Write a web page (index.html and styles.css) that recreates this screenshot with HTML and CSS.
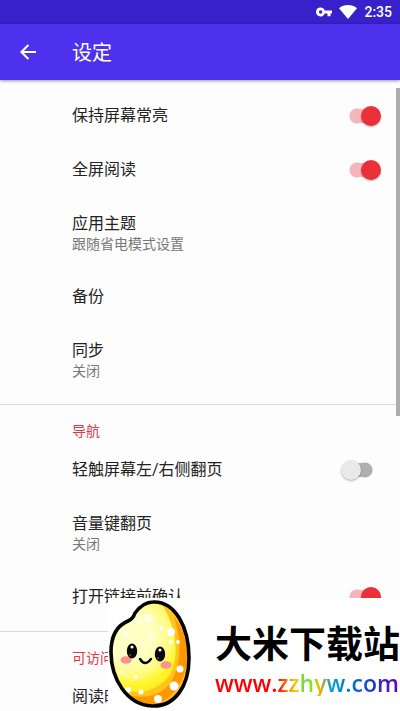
FILE: index.html
```html
<!DOCTYPE html>
<html lang="zh-CN">
<head>
<meta charset="utf-8">
<meta name="viewport" content="width=device-width, initial-scale=1">
<title>设定</title>
<link rel="stylesheet" href="styles.css">
</head>
<body>
<div class="screen">
  <div class="status-bar">
    <svg class="key-icon" width="16" height="10" viewBox="0 0 16 10" aria-hidden="true"><path fill="#fff" fill-rule="evenodd" d="M4.6.4A4.4 4.4 0 0 1 8.7 3.5H16v3h-1.5v2.8h-3V6.5H8.7A4.5 4.5 0 1 1 4.6.4Zm0 2.9a1.7 1.7 0 1 0 0 3.4 1.7 1.7 0 0 0 0-3.4Z"/></svg>
    <svg class="wifi-icon" width="18" height="14" viewBox="0 0 18 14" aria-hidden="true"><path fill="#fff" d="M0 3.2C5-1 13-1 18 3.2L9 14Z"/></svg>
    <span class="clock">2:35</span>
  </div>
  <header class="app-bar">
    <button class="back" type="button" aria-label="返回">
      <svg width="16" height="16" viewBox="0 0 16 16" aria-hidden="true"><path d="M16 8H1.5M8.4 1 1.4 8l7 7" fill="none" stroke="#fff" stroke-width="2"/></svg>
    </button>
    <h1 class="title">设定</h1>
  </header>
  <main class="settings">
    <section class="group">
      <label class="row"><span class="name">保持屏幕常亮</span><input class="switch" type="checkbox" checked></label>
      <label class="row"><span class="name">全屏阅读</span><input class="switch" type="checkbox" checked></label>
      <button class="row" type="button"><span class="name">应用主题<span class="summary">跟随省电模式设置</span></span></button>
      <button class="row" type="button"><span class="name">备份</span></button>
      <button class="row" type="button"><span class="name">同步<span class="summary">关闭</span></span></button>
    </section>
    <section class="group">
      <h2 class="group-title">导航</h2>
      <label class="row"><span class="name">轻触屏幕左/右侧翻页</span><input class="switch" type="checkbox"></label>
      <button class="row" type="button"><span class="name">音量键翻页<span class="summary">关闭</span></span></button>
      <label class="row"><span class="name">打开链接前确认</span><input class="switch" type="checkbox" checked></label>
    </section>
    <section class="group">
      <h2 class="group-title">可访问性</h2>
      <button class="row" type="button"><span class="name">阅读时</span></button>
    </section>
  </main>
  <div class="scroll-thumb"></div>
  <aside class="banner">
    <svg class="mascot" width="84" height="114" viewBox="0 0 84 114" aria-hidden="true">
      <defs>
        <clipPath id="grain"><path d="M27 15C33 7 38 4 45 4C67 3 81 29 81 60C81 88 67 109 44 108C19 107 3 81 3 54C3 39 8 28 20 23Q25 21 27 15Z"/></clipPath>
        <radialGradient id="glow" gradientUnits="userSpaceOnUse" cx="22" cy="38" r="66"><stop offset=".35" stop-color="#ffffc4"/><stop offset=".6" stop-color="#fffb80"/><stop offset=".75" stop-color="#fff52e"/><stop offset="1" stop-color="#ffe600"/></radialGradient>
      </defs>
      <g clip-path="url(#grain)">
        <path fill="#ff9800" d="M0 0h84v114H0z"/>
        <path fill="#ffc51c" d="M0 0h57C76 30 76 72 58 90Q38 106 10 93L0 90Z"/>
        <path fill="url(#glow)" d="M0 0h50C72 31 72 66 58 82Q38 101 8 90L0 90Z"/>
        <path d="M57 10C88 30 89 86 54 105" fill="none" stroke="#ffc233" stroke-width="2"/>
        <g fill="#fff">
          <circle cx="63" cy="34" r="4"/><circle cx="53" cy="30" r="2"/><circle cx="63" cy="44" r="2"/><circle cx="70" cy="44" r="2"/>
          <circle cx="72" cy="71" r="3.5"/><circle cx="66" cy="88" r="4.5"/><circle cx="50" cy="101" r="4"/><circle cx="33" cy="94" r="2.5"/><circle cx="20" cy="92" r="3"/><circle cx="28" cy="79" r="2"/>
          <g opacity=".7"><circle cx="41" cy="20" r="4"/><circle cx="31" cy="24" r="2"/><circle cx="18" cy="36" r="3"/><circle cx="42" cy="39" r="2"/><circle cx="14" cy="74" r="2"/></g>
        </g>
      </g>
      <path d="M27 15C33 7 38 4 45 4C67 3 81 29 81 60C81 88 67 109 44 108C19 107 3 81 3 54C3 39 8 28 20 23Q25 21 27 15Z" fill="none" stroke="#050505" stroke-width="3.6"/>
      <ellipse cx="18" cy="62" rx="5.5" ry="3.8" fill="#ff9090"/><ellipse cx="58" cy="67" rx="5.5" ry="3.8" fill="#ff9090"/>
      <ellipse cx="24" cy="53" rx="5.2" ry="7.5" fill="#080808"/><ellipse cx="52" cy="56" rx="5.2" ry="7.5" fill="#080808"/>
      <circle cx="24" cy="49" r="1.5" fill="#fff"/><circle cx="52" cy="52" r="1.5" fill="#fff"/><circle cx="22" cy="57" r=".6" fill="#fff"/><circle cx="50" cy="60" r=".6" fill="#fff"/>
      <path d="M32 61Q37 69 43 61" fill="none" stroke="#080808" stroke-width="2.4" stroke-linecap="round"/>
    </svg>
    <div class="brand">
      <strong class="brand-name">大米下载站</strong>
      <span class="brand-url">www.zzhyw.com</span>
    </div>
  </aside>
</div>
</body>
</html>
```
FILE: styles.css
```css
* {
  box-sizing: border-box;
}

body {
  margin: 0;
  background: #fdfdfd;
  color: #222;
  font-family: Roboto, "Noto Sans CJK SC", sans-serif;
}

.screen {
  position: relative;
  height: 100vh;
  overflow: hidden;
}

.status-bar {
  display: flex;
  align-items: center;
  justify-content: flex-end;
  height: 24px;
  padding-right: 8px;
  background: #3820cb;
  color: #fff;
}

.wifi-icon {
  margin: 0 7px;
}

.clock {
  font-size: 14px;
  font-weight: 500;
}

.app-bar {
  display: flex;
  align-items: center;
  height: 56px;
  background: #4e31ed;
  box-shadow: 0 1px 3px rgba(0, 0, 0, 0.4);
}

.back {
  display: flex;
  align-items: center;
  width: 72px;
  height: 56px;
  padding: 0 20px;
  border: 0;
  background: none;
}

.title {
  margin: 0;
  padding-top: 2px;
  color: #fff;
  font-size: 20px;
  font-weight: 400;
  line-height: 28px;
}

.settings {
  padding-top: 8px;
}

.group {
  padding-bottom: 8px;
}

.group + .group {
  border-top: 1px solid #d8d8d8;
}

.group-title {
  margin: 0;
  padding: 16px 72px 0;
  color: #dc3c46;
  font-size: 14px;
  font-weight: 400;
  line-height: 21px;
}

.row {
  display: flex;
  align-items: center;
  justify-content: space-between;
  width: 100%;
  padding: 17px 19px 15px 72px;
  border: 0;
  background: none;
  color: inherit;
  font-family: inherit;
  font-size: 16px;
  line-height: 22px;
  text-align: left;
}

.summary {
  display: block;
  color: #777;
  font-size: 14px;
  line-height: 19px;
}

.switch {
  display: flex;
  align-items: center;
  appearance: none;
  width: 40px;
  height: 20px;
  margin: 0;
  background:
    radial-gradient(circle at 24px 10px, #b0b0b0 7px, transparent 8px),
    linear-gradient(#b0b0b0, #b0b0b0) 16px 3px / 8px 14px no-repeat;
}

.switch::before {
  content: "";
  width: 20px;
  height: 20px;
  border-radius: 50%;
  background: #e9e9e9;
  box-shadow: 0 1px 2px rgba(0, 0, 0, 0.3);
}

.switch:checked {
  justify-content: flex-end;
  background:
    radial-gradient(circle at 16px 10px, #f5b6bb 7px, transparent 8px),
    linear-gradient(#f5b6bb, #f5b6bb) 16px 3px / 8px 14px no-repeat;
}

.switch:checked::before {
  background: #ec3039;
}

.scroll-thumb {
  position: absolute;
  top: 88px;
  right: 0;
  width: 4px;
  height: 328px;
  background: #adadad;
}

.banner {
  position: absolute;
  right: 0;
  bottom: 0;
  display: flex;
  gap: 23px;
  width: 292px;
  height: 113px;
  overflow: hidden;
  background: #fff;
}

.mascot {
  flex: none;
}

.brand {
  display: flex;
  flex-direction: column;
  align-items: flex-start;
  padding-top: 24px;
  white-space: nowrap;
}

.brand-name {
  color: #000;
  font-size: 37px;
  font-weight: 700;
  line-height: 48px;
}

.brand-url {
  background: linear-gradient(90deg, #f00 0, #f00 34%, #ff8c00 40%, #f5d000 44%, #50e050 49%, #9ee800 54%, #f0b000 57%, #00a0d0 63%, #0070d0 75%, #2030d0 87%, #7000b0 100%);
  background-clip: text;
  color: transparent;
  font-family: "Open Sans", sans-serif;
  font-size: 23px;
  font-weight: 600;
  line-height: 26px;
}
```
